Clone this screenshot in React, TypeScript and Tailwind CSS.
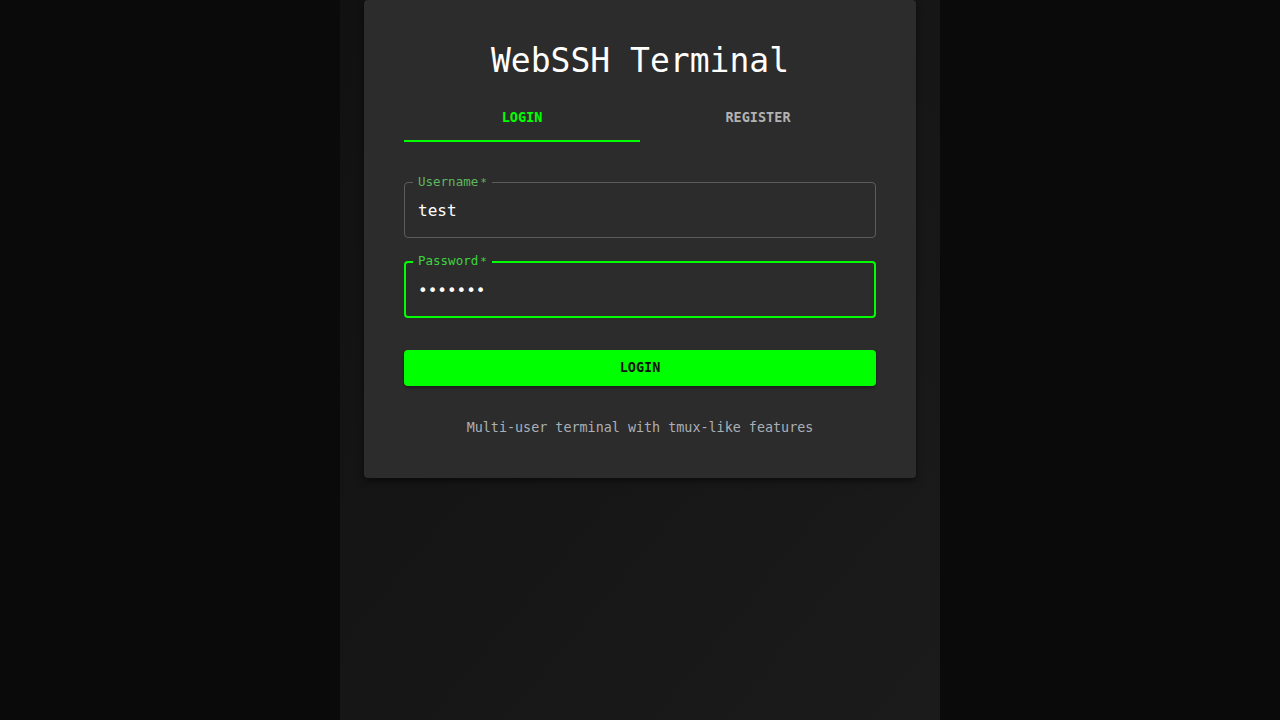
import { useState } from 'react';

const mono = "font-['DejaVu_Sans_Mono','Liberation_Mono',monospace]";

function OutlinedField({
  label,
  value,
  type = 'text',
  focused = false,
}: {
  label: string;
  value: string;
  type?: string;
  focused?: boolean;
}) {
  return (
    <div className="relative h-14">
      <fieldset
        className={`pointer-events-none absolute inset-x-0 bottom-0 m-0 rounded px-2 ${
          focused ? '-top-[7px] border-2 border-[#00ff00]' : '-top-[6px] border border-[#5c5c5c]'
        }`}
      >
        <legend
          className={`px-[5px] text-[12.5px] leading-[12px] ${
            focused ? '-ml-px text-[#3fd43f]' : 'text-[#5cb85c]'
          }`}
        >
          {label}
          <span className="ml-[2px] text-[11px]">*</span>
        </legend>
      </fieldset>
      <input
        type={type}
        defaultValue={value}
        className={`h-full w-full bg-transparent px-[14px] text-[16px] text-white outline-none ${mono}`}
      />
    </div>
  );
}

export default function App() {
  const [tab, setTab] = useState<'login' | 'register'>('login');

  return (
    <div className={`flex min-h-screen justify-center bg-[#0a0a0a] ${mono}`}>
      <div className="min-h-screen w-[600px] bg-gradient-to-br from-[#111111] to-[#1b1b1b] px-6">
        <div className="rounded bg-[#2c2c2c] px-10 pt-10 pb-10 shadow-[0_3px_6px_rgba(0,0,0,0.5)]">
          <h1 className="mb-3 text-center text-[33px] leading-[42px] text-white">WebSSH Terminal</h1>

          <div className="flex h-12">
            {(['login', 'register'] as const).map((t) => (
              <button
                key={t}
                onClick={() => setTab(t)}
                className={`relative flex-1 pb-[2px] text-[13.5px] font-semibold uppercase ${
                  tab === t ? 'text-[#00ff00]' : 'text-[#b3b3b3]'
                }`}
              >
                {t}
                {tab === t && <span className="absolute inset-x-0 bottom-0 h-[2px] bg-[#00ff00]" />}
              </button>
            ))}
          </div>

          <div className="mt-10">
            <OutlinedField label="Username" value="test" />
          </div>
          <div className="mt-6">
            <OutlinedField label="Password" value="1234567" type="password" focused />
          </div>

          <button className="mt-8 h-9 w-full rounded bg-[#00ff00] pb-[2px] text-[13.5px] font-semibold text-[#111] shadow-[0_2px_3px_rgba(0,0,0,0.35)]">
            LOGIN
          </button>

          <p className="mt-8 text-center text-[13.4px] leading-5 text-[#aab0b8]">
            Multi-user terminal with tmux-like features
          </p>
        </div>
      </div>
    </div>
  );
}
